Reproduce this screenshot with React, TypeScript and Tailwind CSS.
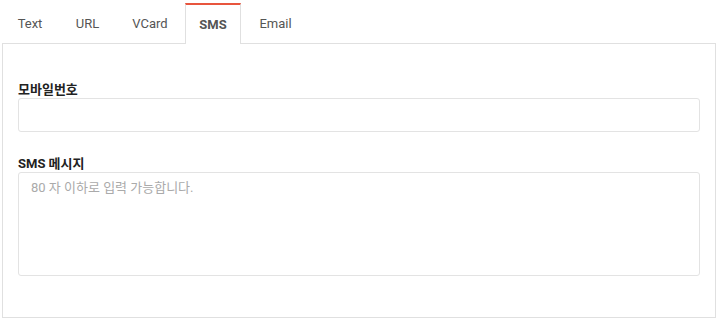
import React from 'react';

const tabs = [
  { label: 'Text', width: 'w-[56px]' },
  { label: 'URL', width: 'w-[55px]' },
  { label: 'VCard', width: 'w-[66px]' },
  { label: 'SMS', width: 'w-[56px]' },
  { label: 'Email', width: 'w-[65px]' },
];

const App: React.FC = () => {
  const active = 'SMS';

  return (
    <div
      className="w-[720px] h-[323px] bg-white pt-[3px] pl-[2px] pr-[4px]"
      style={{ fontFamily: 'Roboto, "Noto Sans CJK KR", sans-serif' }}
    >
      {/* Tabs */}
      <ul className="flex gap-[2px] h-[40px] relative z-10">
        {tabs.map(tab => (
          <li
            key={tab.label}
            className={
              tab.label === active
                ? `${tab.width} h-[41px] pt-[1px] flex items-center justify-center border-x border-t-2 border-[#e0e0e0] border-t-[#e8553e] bg-white text-[13px] font-bold text-[#555]`
                : `${tab.width} h-[40px] pt-[2px] flex items-center justify-center text-[13px] text-[#555]`
            }
          >
            {tab.label}
          </li>
        ))}
      </ul>

      {/* Panel */}
      <div className="h-[275px] border border-[#e0e0e0] px-[15px] pt-[38px]">
        <label className="block text-[13px] font-bold text-[#222] leading-[16px]">
          모바일번호
        </label>
        <input
          type="text"
          className="block w-full h-[34px] border border-[#e3e3e3] rounded-[3px] px-3 text-[13px] outline-none"
        />

        <label className="block text-[13px] font-bold text-[#222] leading-[16px] mt-[24px]">
          SMS 메시지
        </label>
        <textarea
          placeholder="80 자 이하로 입력 가능합니다."
          className="block w-full h-[104px] border border-[#e3e3e3] rounded-[3px] px-[12px] pt-[5px] text-[13px] leading-[20px] resize-none outline-none placeholder:text-[#aaa]"
        />
      </div>
    </div>
  );
};

export default App;
